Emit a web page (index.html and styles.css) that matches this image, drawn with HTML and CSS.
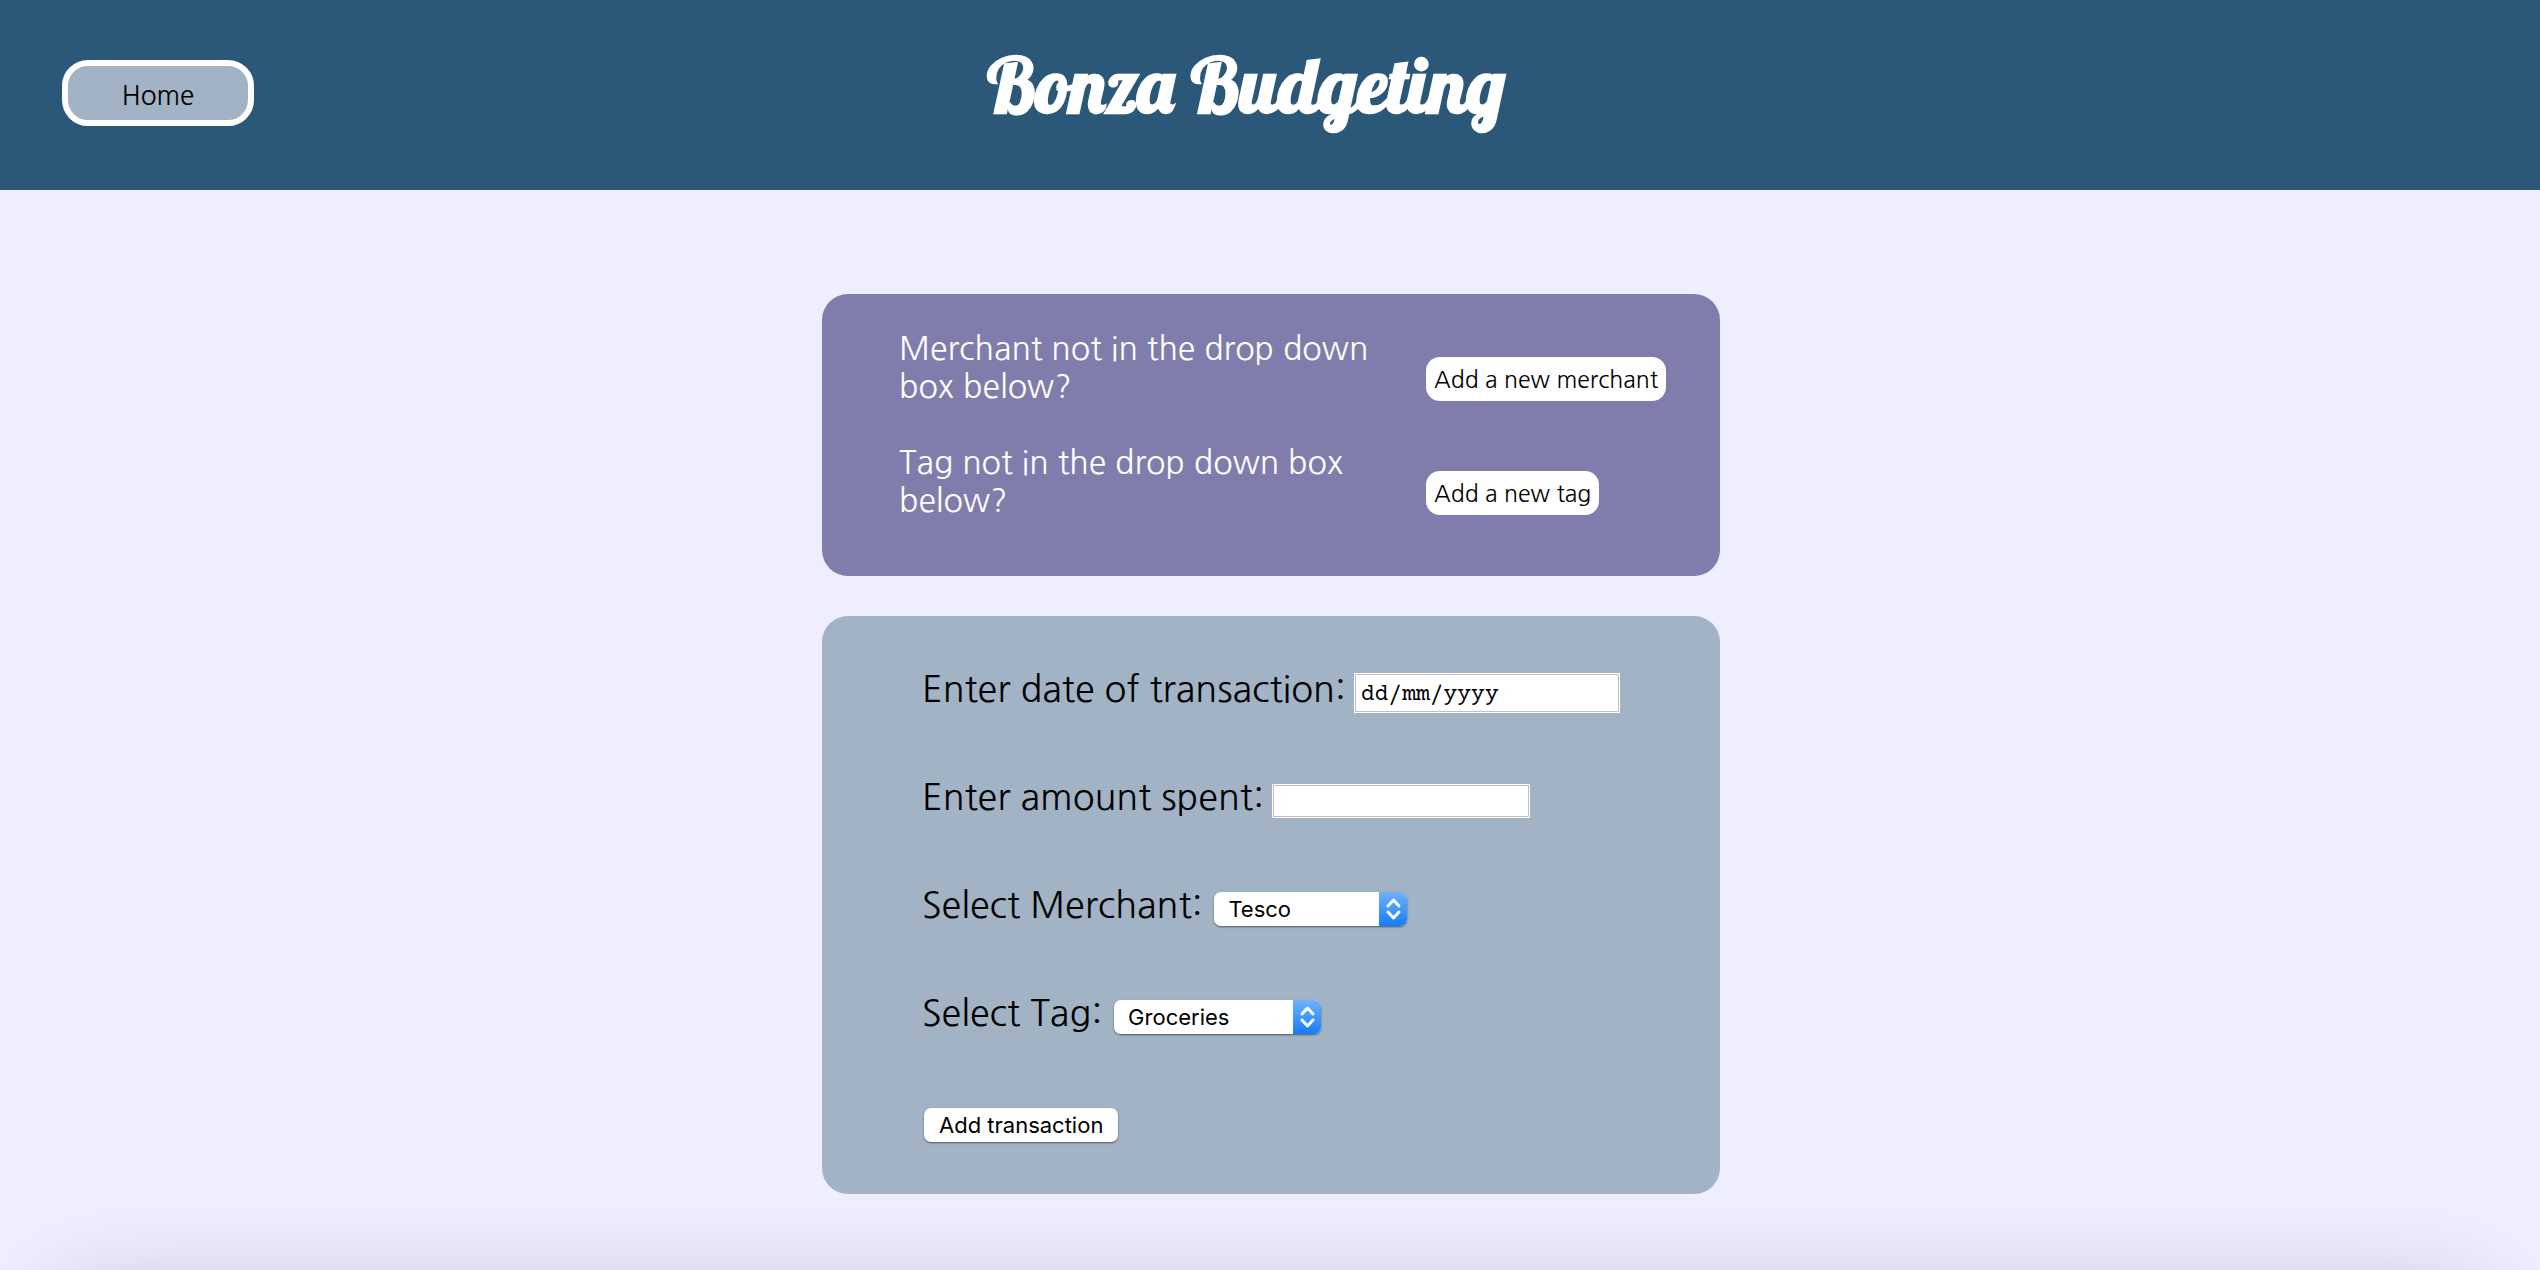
FILE: index.html
```html
<!DOCTYPE html>
<html lang="en-GB">
<head>
  <meta charset="utf-8">
  <title>Bonza Budgeting</title>
  <link rel="stylesheet" href="styles.css">
</head>
<body>
  <header class="site-header">
    <nav class="site-nav"><a class="home-link" href="#">Home</a></nav>
    <h1 class="site-title">Bonza Budgeting</h1>
  </header>

  <main class="content">
    <section class="card shortcuts">
      <p class="shortcut-text">Merchant not in the drop down box below?</p>
      <button class="shortcut-button" type="button">Add a new merchant</button>
      <p class="shortcut-text">Tag not in the drop down box below?</p>
      <button class="shortcut-button" type="button">Add a new tag</button>
    </section>

    <form class="card transaction-form">
      <div class="field">
        <label for="date">Enter date of transaction:</label>
        <input class="text-input date-input" id="date" type="text" placeholder="dd/mm/yyyy">
      </div>
      <div class="field">
        <label for="amount">Enter amount spent:</label>
        <input class="text-input amount-input" id="amount" type="text">
      </div>
      <div class="field">
        <label for="merchant">Select Merchant:</label>
        <span class="select-box merchant-select">
          <select id="merchant"><option>Tesco</option></select>
          <svg class="arrows" viewBox="0 0 28 34" aria-hidden="true"><path d="M9 14l5.500-6 5.500 6M9 20l5.500 6 5.500-6"/></svg>
        </span>
      </div>
      <div class="field">
        <label for="tag">Select Tag:</label>
        <span class="select-box tag-select">
          <select id="tag"><option>Groceries</option></select>
          <svg class="arrows" viewBox="0 0 28 34" aria-hidden="true"><path d="M9 14l5.500-6 5.500 6M9 20l5.500 6 5.500-6"/></svg>
        </span>
      </div>
      <div class="field">
        <button class="submit-button" type="submit">Add transaction</button>
      </div>
    </form>
  </main>
</body>
</html>
```

FILE: styles.css
```css
* {
  box-sizing: border-box;
}

body {
  margin: 0;
  min-height: 100vh;
  overflow-x: hidden;
  background: #efeeff;
  color: #000;
  font-family: "Nanum Gothic", NanumGothic, "Noto Sans CJK KR", "Noto Sans", sans-serif;
  font-weight: 400;
}

/* Soft shade along the bottom edge of the window */
body::after {
  content: "";
  position: fixed;
  left: 60px;
  right: 60px;
  bottom: -125px;
  height: 100px;
  box-shadow: 0 0 100px rgba(0, 0, 0, 0.2);
  pointer-events: none;
}

.site-header {
  display: grid;
  grid-template-columns: 1fr auto 1fr;
  align-items: start;
  min-height: 190px;
  padding: 24px 110px 24px 62px;
  background: #2b5878;
}

.site-nav {
  padding-top: 36px;
}

.home-link {
  display: block;
  width: 192px;
  height: 66px;
  border: 6px solid #fff;
  border-radius: 26px;
  background: #a1b3c5;
  color: #000;
  font-size: 26px;
  line-height: 60px;
  text-align: center;
  text-decoration: none;
}

.site-title {
  margin: 0;
  color: #fff;
  font-family: Lobster, "Liberation Serif", serif;
  font-size: 77px;
  font-weight: 700;
  line-height: 120px;
}

.content {
  display: flex;
  flex-direction: column;
  align-items: center;
  gap: 40px;
  padding: 104px 0 76px 2px;
}

.card {
  width: 898px;
  max-width: 100%;
  border-radius: 26px;
}

.shortcuts {
  display: grid;
  grid-template-columns: 487px auto;
  column-gap: 40px;
  row-gap: 38px;
  justify-items: start;
  align-items: end;
  padding: 36px 40px 56px 77px;
  background: #807dad;
}

.shortcut-text {
  margin: 0;
  color: #fff;
  font-size: 32px;
  line-height: 38px;
}

.shortcut-button {
  height: 44px;
  margin-bottom: 5px;
  padding: 0 8px;
  border: 0;
  border-radius: 14px;
  background: #fff;
  color: #000;
  font: inherit;
  font-size: 23px;
  white-space: nowrap;
}

.transaction-form {
  display: flex;
  flex-direction: column;
  gap: 54px;
  padding: 50px 50px 42px 100px;
  background: #a1b3c5;
}

.field {
  display: flex;
  align-items: center;
  gap: 8px;
  min-height: 54px;
}

.field label {
  padding-bottom: 8px;
  font-size: 36px;
  line-height: 46px;
}

.text-input {
  border: 1px solid #fff;
  border-radius: 0;
  background: #fff;
  box-shadow: inset 0 0 0 1px #c0c0c0;
  color: #000;
  font-family: "Courier Prime", Courier, "Liberation Mono", monospace;
  font-size: 23px;
}

.text-input::placeholder {
  color: #000;
  opacity: 1;
}

.date-input {
  width: 266px;
  height: 40px;
  padding: 3px 6px 0;
}

.amount-input {
  width: 258px;
  height: 34px;
  padding: 0 6px;
}

.select-box {
  display: grid;
  height: 34px;
  margin: 0 4px;
  overflow: hidden;
  border-radius: 7px;
  box-shadow: 0 1px 2px rgba(0, 0, 0, 0.5);
}

.merchant-select {
  width: 193px;
}

.tag-select {
  width: 207px;
}

.select-box select,
.arrows {
  grid-area: 1 / 1;
}

.select-box select {
  width: 100%;
  height: 34px;
  padding: 0 36px 0 14px;
  border: 0;
  background: #fff;
  color: #000;
  font-family: Inter, sans-serif;
  font-size: 22px;
  appearance: none;
}

.arrows {
  justify-self: end;
  width: 28px;
  height: 34px;
  background: linear-gradient(#6fb2fa, #157dfd);
  fill: none;
  stroke: #fff;
  stroke-width: 3;
  stroke-linecap: round;
  stroke-linejoin: round;
  pointer-events: none;
}

.submit-button {
  height: 34px;
  margin: 0 2px;
  padding: 0 15px;
  border: 0;
  border-radius: 7px;
  background: #fff;
  box-shadow: 0 1px 2px rgba(0, 0, 0, 0.5);
  color: #000;
  font-family: Inter, sans-serif;
  font-size: 22px;
}
```
